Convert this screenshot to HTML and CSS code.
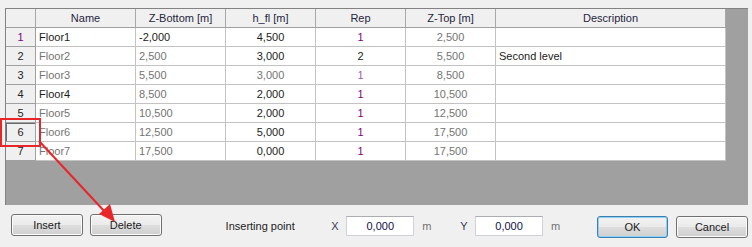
FILE: index.html
```html
<!DOCTYPE html>
<html lang="en">
<head>
  <meta charset="UTF-8" />
  <title>Floors</title>
  <link rel="stylesheet" href="styles.css">
</head>
<body>
  <div class="grid-panel">
    <table class="floors">
      <thead>
        <tr>
          <th class="corner"></th>
          <th class="c-name">Name</th>
          <th class="c-num">Z-Bottom [m]</th>
          <th class="c-num">h_fl [m]</th>
          <th class="c-num">Rep</th>
          <th class="c-num">Z-Top [m]</th>
          <th class="c-desc">Description</th>
        </tr>
      </thead>
      <tbody>
        <tr>
          <td class="rh purple">1</td>
          <td>Floor1</td>
          <td>-2,000</td>
          <td class="mid">4,500</td>
          <td class="mid purple">1</td>
          <td class="mid grey">2,500</td>
          <td></td>
        </tr>
        <tr>
          <td class="rh">2</td>
          <td class="grey">Floor2</td>
          <td class="grey">2,500</td>
          <td class="mid">3,000</td>
          <td class="mid">2</td>
          <td class="mid grey">5,500</td>
          <td>Second level</td>
        </tr>
        <tr>
          <td class="rh">3</td>
          <td class="grey">Floor3</td>
          <td class="grey">5,500</td>
          <td class="mid grey">3,000</td>
          <td class="mid light-purple">1</td>
          <td class="mid grey">8,500</td>
          <td></td>
        </tr>
        <tr>
          <td class="rh">4</td>
          <td>Floor4</td>
          <td class="grey">8,500</td>
          <td class="mid">2,000</td>
          <td class="mid purple">1</td>
          <td class="mid grey">10,500</td>
          <td></td>
        </tr>
        <tr>
          <td class="rh">5</td>
          <td class="grey">Floor5</td>
          <td class="grey">10,500</td>
          <td class="mid">2,000</td>
          <td class="mid purple">1</td>
          <td class="mid grey">12,500</td>
          <td></td>
        </tr>
        <tr>
          <td class="rh selected">6</td>
          <td class="grey">Floor6</td>
          <td class="grey">12,500</td>
          <td class="mid">5,000</td>
          <td class="mid purple">1</td>
          <td class="mid grey">17,500</td>
          <td></td>
        </tr>
        <tr>
          <td class="rh">7</td>
          <td class="grey">Floor7</td>
          <td class="grey">17,500</td>
          <td class="mid">0,000</td>
          <td class="mid purple">1</td>
          <td class="mid grey">17,500</td>
          <td></td>
        </tr>
      </tbody>
    </table>
  </div>

  <div class="bottom-bar">
    <button class="btn">Insert</button>
    <button class="btn">Delete</button>
    <span class="label point">Inserting point</span>
    <span class="label axis">X</span>
    <input class="coord" type="text" value="0,000" />
    <span class="label unit">m</span>
    <span class="label axis">Y</span>
    <input class="coord" type="text" value="0,000" />
    <span class="label unit">m</span>
    <div class="dialog-btns">
      <button class="btn ok">OK</button>
      <button class="btn">Cancel</button>
    </div>
  </div>

  <!-- annotation over the grid -->
  <div class="mark-box"></div>
  <svg class="mark-arrow" width="752" height="247" viewBox="0 0 752 247">
    <line x1="39" y1="141" x2="106" y2="213" stroke="#e8262a" stroke-width="2" />
    <polygon points="115,222 99,214 110,204" fill="#e8262a" />
  </svg>
</body>
</html>
```

FILE: styles.css
```css
body {
  margin: 0;
  background: #f0f0f0;
  font-family: "Liberation Sans", Arial, sans-serif;
  font-size: 11px;
  color: #1c1c1c;
  width: 752px;
  height: 247px;
  overflow: hidden;
  position: relative;
}
.grid-panel {
  margin: 8px 4px 0 5px;
  height: 197px;
  background: #a0a0a0;
  box-sizing: border-box;
  border-left: 1px solid #828282;
  border-top: 1px solid #828282;
}
.floors {
  border-collapse: collapse;
  table-layout: fixed;
  width: 720px;
  background: #fff;
}
.floors th,
.floors td {
  height: 18px;
  padding: 0 3px;
  border: 1px solid #c3c3c3;
  white-space: nowrap;
  overflow: hidden;
  text-align: left;
}
.floors th {
  background: #f0f0f0;
  font-weight: normal;
  text-align: center;
  color: #262640;
  border-color: #a8a8a8 #a8a8a8 #a0a0a0 #a8a8a8;
}
.floors th:first-child,
.floors td:first-child {
  border-left: none;
}
.floors thead th {
  border-top: none;
}
.corner { width: 23px; }
.c-name { width: 93px; }
.c-num { width: 83px; }
.c-desc { width: 223px; }
.floors td.rh {
  background: #f0f0f0;
  text-align: center;
  border-color: #a0a0a0;
  color: #262626;
}
.floors td.rh.selected {
  box-shadow: inset 1px 1px 0 #6a6a6a;
}
.floors td.mid { text-align: center; }
.grey { color: #747474; }
.purple { color: #800080; }
.light-purple { color: #a060a0; }
.floors td.rh.purple { color: #800080; }

.bottom-bar {
  display: flex;
  align-items: flex-start;
  padding: 9px 4px 0 11px;
}
.btn {
  font-family: "Liberation Sans", Arial, sans-serif;
  font-size: 11px;
  color: #1c1c1c;
  width: 72px;
  height: 22px;
  padding: 0;
  margin: 0 7px 0 0;
  border: 1px solid #707070;
  border-radius: 3px;
  background: linear-gradient(#f2f2f2 0%, #ebebeb 50%, #dddddd 51%, #cfcfcf 100%);
  box-shadow: inset 0 0 0 1px #fcfcfc;
}
.label {
  line-height: 20px;
  margin-top: 2px;
}
.point { margin-left: 57px; width: 106px; }
.axis { color: #3a3a5a; width: 15px; }
.unit { color: #707070; margin-left: 8px; width: 38px; }
.coord {
  box-sizing: border-box;
  width: 68px;
  height: 20px;
  margin-top: 2px;
  padding: 0;
  border: 1px solid #cfd2d8;
  border-top-color: #abadb3;
  background: #fff;
  text-align: center;
  font-family: "Liberation Sans", Arial, sans-serif;
  font-size: 11px;
  color: #10104a;
}
.dialog-btns {
  display: flex;
  margin-left: auto;
  margin-top: 2px;
}
.dialog-btns .btn {
  margin: 0 0 0 8px;
}
.btn.ok {
  width: 71px;
  border-color: #3c7fb1;
  box-shadow: inset 0 0 0 1px #8ed1f4;
}

.mark-box {
  position: absolute;
  left: 0;
  top: 118px;
  width: 37px;
  height: 25px;
  border: 2px solid #e8262a;
}
.mark-arrow {
  position: absolute;
  left: 0;
  top: 0;
  pointer-events: none;
}
```
